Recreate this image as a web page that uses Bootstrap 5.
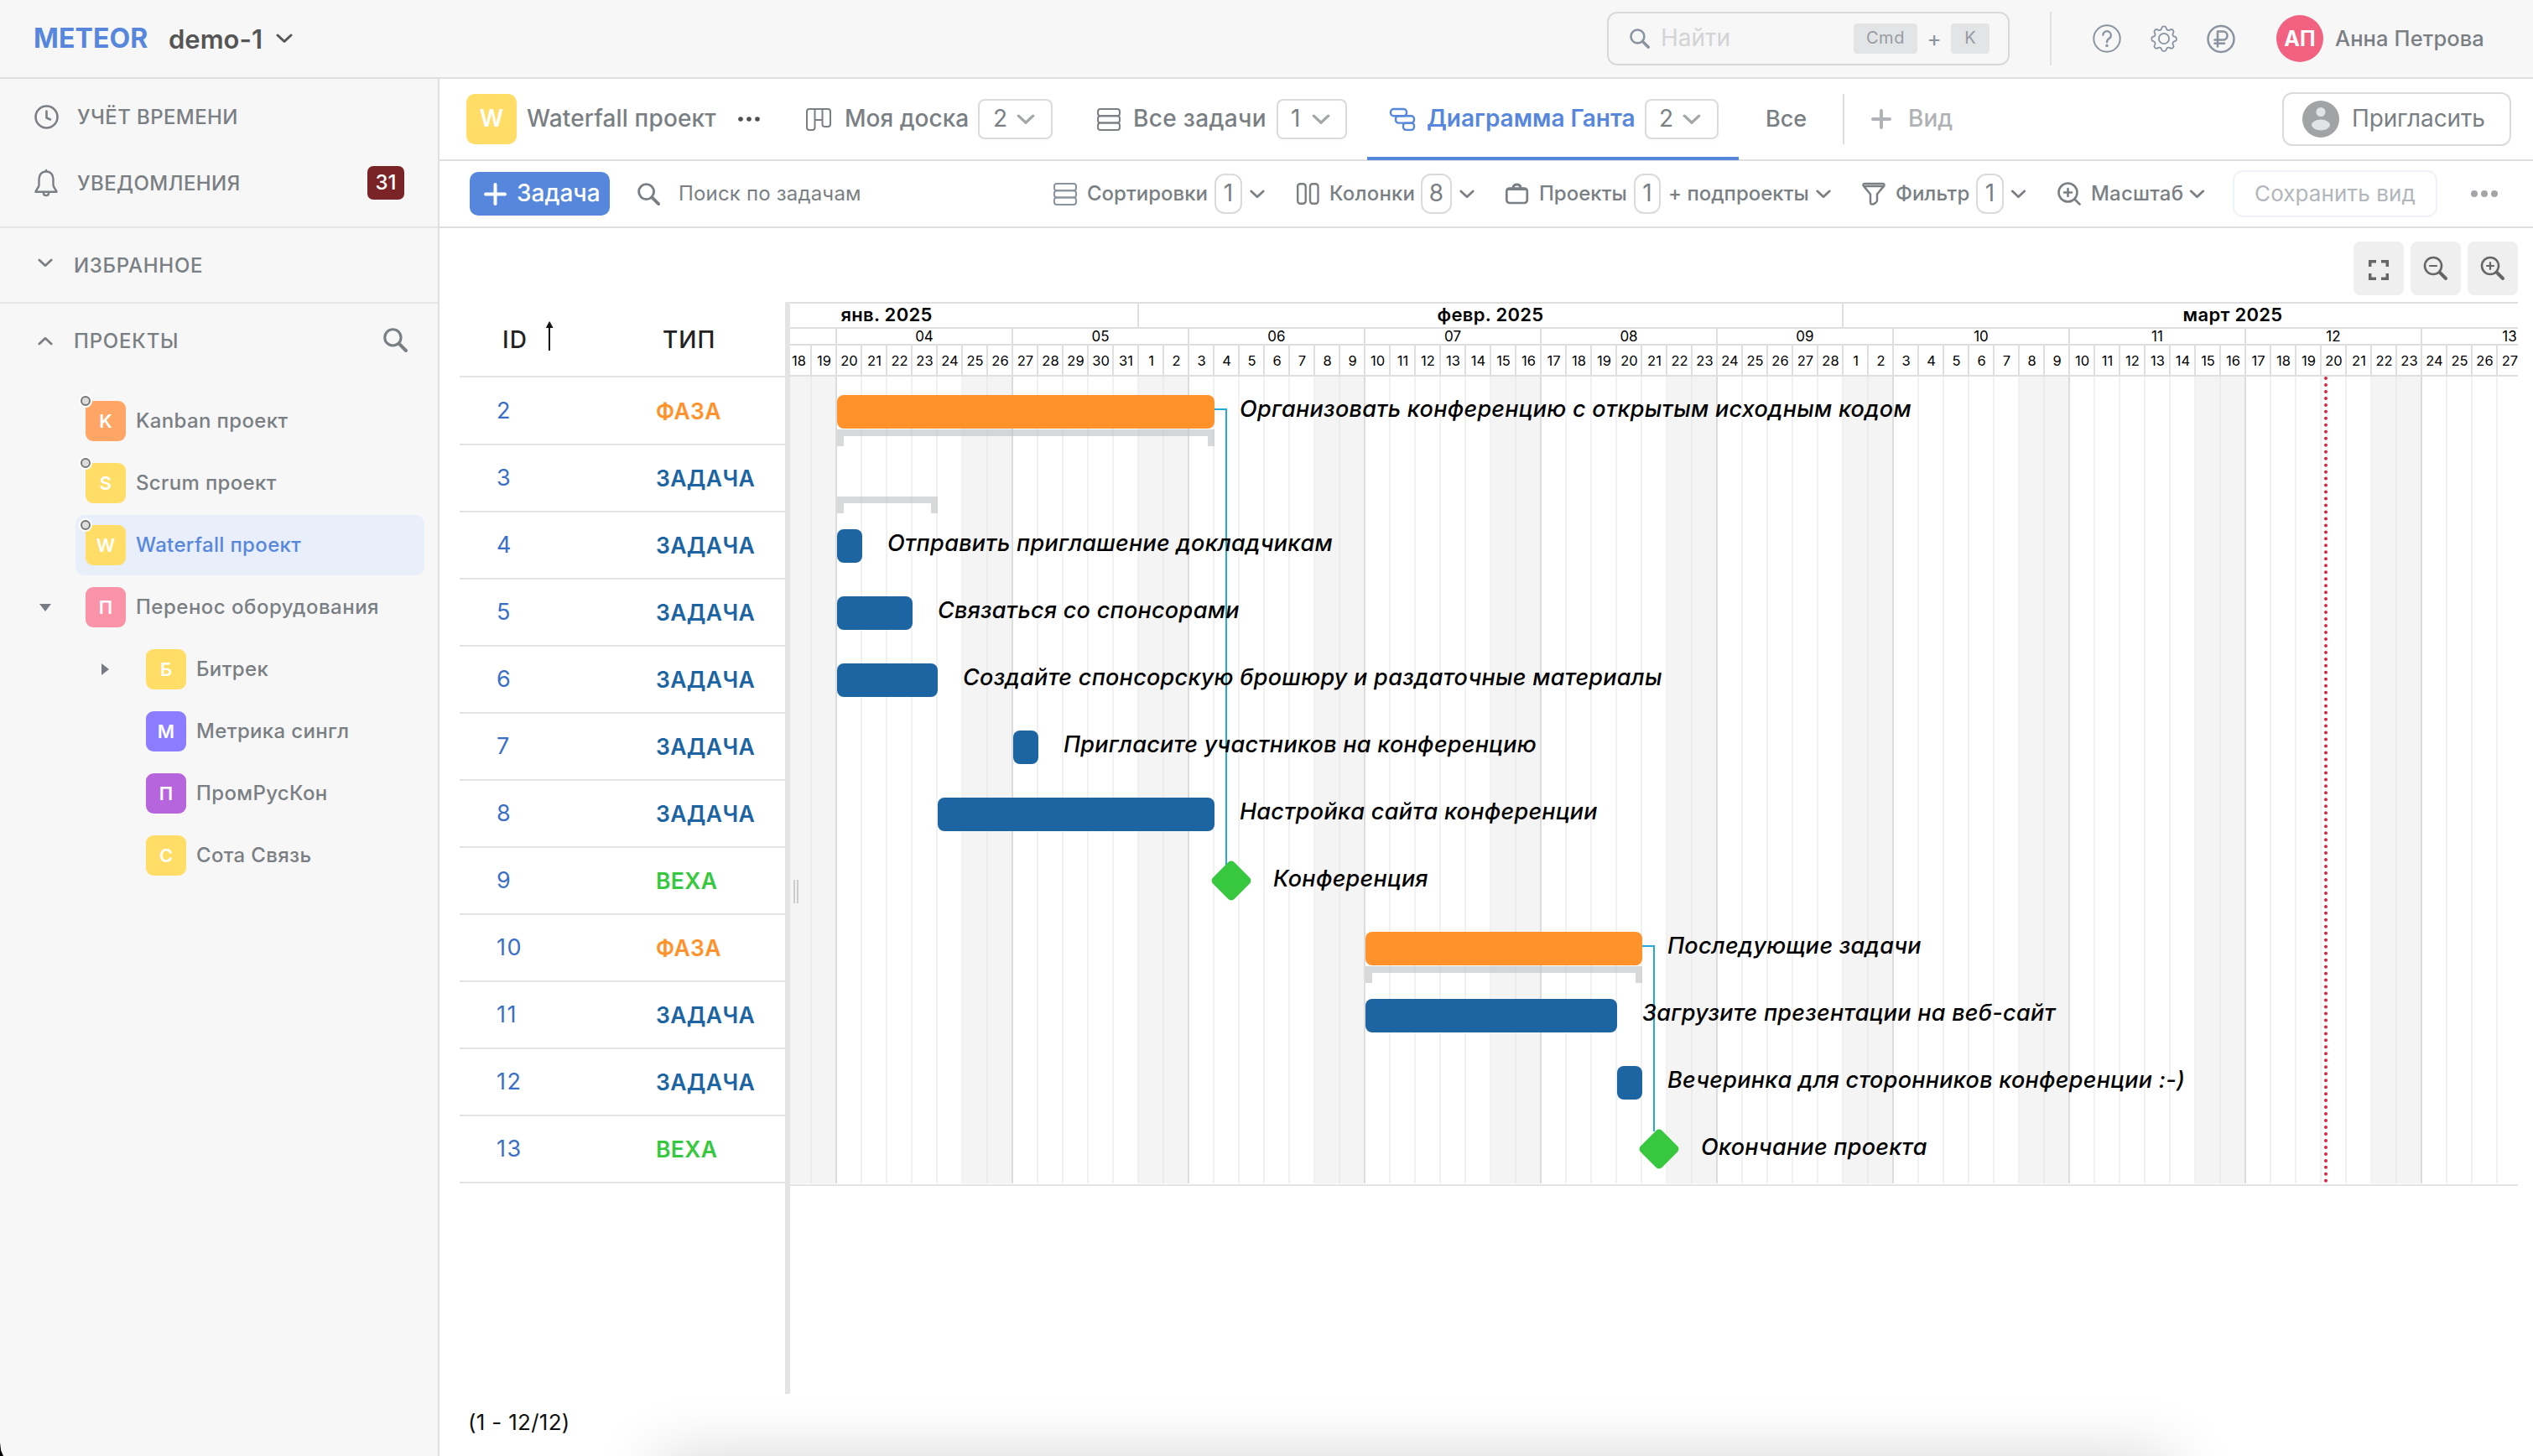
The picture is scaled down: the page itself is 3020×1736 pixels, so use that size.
<!DOCTYPE html>
<html lang="ru">
<head>
<meta charset="utf-8">
<title>METEOR</title>
<link href="https://cdn.jsdelivr.net/npm/bootstrap@5.3.0/dist/css/bootstrap.min.css" rel="stylesheet">
<style>
:root{--line:#dfdfdf;--ink:#7a7f84;--blue:#5787dc}
body{font-family:Inter,"Noto Sans",sans-serif;font-size:24px;line-height:1.21;color:var(--ink);background:#fff;width:3020px;height:1736px;overflow:hidden;position:relative}
svg{display:block;flex:none;fill:none;stroke:currentColor;stroke-width:2;stroke-linecap:round;stroke-linejoin:round;overflow:visible}
.d-flex{white-space:nowrap}
.d-flex>*{flex-shrink:0}
.w5{font-weight:500}.w6{font-weight:600}.w7{font-weight:700}
.topline{height:94px;background:#f7f7f7;border-bottom:2px solid var(--line)}
.brand{font-size:32px;color:var(--blue);letter-spacing:.1px;padding:1px 0 0 40px;width:201px}
.tenant{font-size:31px;color:#555;width:128px;padding-top:1px}
.finder{width:480px;height:64px;border:2px solid #d9d9d9;border-radius:12px;margin-left:1567px;padding-left:25px;color:#8a93a0}
.key{height:36px;background:#e3e4e6;border-radius:4px;font-size:20px;color:#969ba3;padding-bottom:2px}
.vr-line{width:2px;background:#e2e2e2}
.face{width:56px;height:56px;border-radius:50%;background:#f2617f;color:#fff;font-size:25px}
.side{width:524px;height:1642px;background:#f7f7f7;border-right:2px solid var(--line)}
.side-item{height:80px;padding-left:41px;letter-spacing:.4px}
.side-item>span:not(.count31),.side-sec>span{padding-top:1px}
.side-sec{height:90px;border-top:2px solid #e6e6e6;padding-left:45px;letter-spacing:.7px}
.count31{width:44px;height:40px;border-radius:7px;background:#7a2428;color:#fff;letter-spacing:0}
.proj{height:74px;letter-spacing:.35px;position:relative}
.proj.l1{padding-left:102px}
.proj.l2{padding-left:174px}
.proj.active{color:var(--blue)}
.proj.active::before{content:"";position:absolute;left:90px;right:16px;top:1px;height:72px;border-radius:11px;background:#e8eefa}
.proj>*{position:relative}
.tile{width:48px;height:48px;border-radius:9px;color:#fff;font-size:22px;font-weight:600;letter-spacing:0;margin-right:12px}
.tile.big{width:60px;height:60px;border-radius:10px;font-size:28px;margin-right:12px}
.c-y{background:#ffdd66}.c-o{background:#ffa566}.c-p{background:#fa93a8}.c-v{background:#8c7cff}.c-m{background:#b765dd}
.dot{position:absolute;left:-6px;top:-6px;width:12px;height:12px;border-radius:50%;border:2px solid #777;background:#ddd;box-shadow:0 0 0 2px #fff}
.proj .twist{position:absolute;stroke:none;fill:#777c82}
.main-area{width:2496px}
.tabs{height:98px;border-bottom:2px solid var(--line);font-size:28px}
.tab-i{height:96px;position:relative}
.tab-i.on{color:var(--blue)}
.tab-i.on::after{content:"";position:absolute;left:-27px;width:443px;bottom:-1px;height:4px;background:var(--blue)}
.pick{height:48px;border:2px solid #dbdbdb;border-radius:8px;color:#7a7f84;font-weight:400;padding-left:16px;box-shadow:0 3px 3px rgba(0,0,0,.015)}
.invite{width:273px;height:64px;border:2px solid #dbdbdb;border-radius:12px}
.tools{height:80px;border-bottom:2px solid var(--line)}
.addbtn{width:167px;height:52px;border-radius:10px;background:var(--blue);color:#fff;font-size:28px}
.num{height:48px;border:2px solid #dbdbdb;border-radius:12px;font-size:28px}
.save{width:244px;height:56px;border:2px solid #eef3f9;border-radius:12px;color:#b3b6ba;font-size:26px;letter-spacing:.1px}
.zbtn{width:60px;height:64px;border-radius:8px;background:#efefef;color:#666}
.zoombar{height:88px;padding:16px 18px 0 0;gap:8px}
.grid-l{width:388px;margin-left:24px}
.ghead{height:90px;border-bottom:2px solid #e4e4e4;color:#222;font-size:28px;letter-spacing:1px;margin-bottom:1px;padding-top:3px}
.grow{height:80px;border-bottom:2px solid #e4e4e4;font-size:26.5px;padding:1px 0 0 43px}
.grow .gid{width:191px;padding-left:1px;color:#3a6fc8;font-size:27px;letter-spacing:1.5px}
.grow .gty{letter-spacing:.35px;font-weight:600}
.t-ph{color:#ff922b}.t-ta{color:#1d64a3}.t-mi{color:#38c840}
.splitter{width:6px;height:1302px;background:#e4e4e4}
.gantt{width:2060px;height:1054px;position:relative;overflow:hidden;color:#000;border-bottom:2px solid #e4e4e4}
.scale{border-top:2px solid var(--line)}
.sc{border-right:2px solid var(--line)}
.m-row{height:30px;font-size:22px;letter-spacing:.3px}
.m-row .sc{padding-bottom:2px}
.w-row{height:20px;font-size:17px}
.d-row{height:38px;font-size:16.5px}
.w-row .sc{width:210px}.d-row .sc{width:30px;padding-left:1px}
.chart{height:964px;border-top:2px solid var(--line);margin-top:-1px;padding-left:56px;position:relative;
background:
 linear-gradient(90deg,#f1f1f1 0 2px,transparent 2px) 54px 0/30px 100%,
 linear-gradient(90deg,transparent 148px,#f4f4f4 148px 208px,#dcdcdc 208px 210px) 56px 0/210px 100%}
.chart::before{content:"";position:absolute;inset:0;background:linear-gradient(90deg,transparent 178px,#ebebeb 178px 180px,transparent 180px 208px,#dcdcdc 208px 210px) 56px 0/210px 100%}
.lane{height:80px;position:relative}
.bar{height:40px;border-radius:8px;margin-top:21.5px}
.b-ph{background:#ff922b}.b-ta{background:#1d64a3}
.lab{font-style:italic;font-weight:500;font-size:27px;letter-spacing:.27px;padding-left:30px;margin-top:22.5px}
.brk{position:absolute;top:63px;height:20px;border:8px solid rgba(195,196,200,.65);border-bottom:0}
.dia{width:36px;height:36px;border-radius:5px;background:#38c840;transform:rotate(45deg);margin:23px 7px 0}
.lnk{position:absolute;border-top:2px solid #25a9dc;border-right:2px solid #25a9dc}
.now{position:absolute;left:1829px;top:0;bottom:0;border-left:4px dotted #e0213f}
.grip{position:absolute;left:4px;top:689px;width:6px;height:28px;border:solid #ccc;border-width:0 2px;z-index:2}
.pager{color:#111;font-size:26px;letter-spacing:.3px;padding:18px 0 0 34px}
.dock{position:absolute;left:785px;right:430px;top:1742px;height:60px;box-shadow:0 0 80px rgba(0,0,0,.2)}
.corner{position:absolute;left:0;bottom:0;width:4px;height:16px;background:#000;clip-path:polygon(0 0,30% 60%,100% 100%,0 100%)}
</style>
<script src="https://cdn.jsdelivr.net/npm/bootstrap@5.3.0/dist/js/bootstrap.bundle.min.js"></script>
</head>
<body>
<svg width="0" height="0" class="position-absolute">
 <symbol id="chev" viewBox="0 0 20 12"><path d="M2 2l8 7.500 8-7.500" stroke-width="3"/></symbol>
 <symbol id="lens" viewBox="0 0 28 28"><circle cx="11" cy="11" r="9.300" stroke-width="3"/><path d="M18 18l8 8" stroke-width="4"/></symbol>
 <symbol id="stack" viewBox="0 0 28 27"><rect x="1" y="1" width="26" height="8.300" rx="3"/><rect x="1" y="9.300" width="26" height="8.300" rx="3"/><rect x="1" y="17.600" width="26" height="8.300" rx="3"/></symbol>
</svg>

<header class="topline d-flex align-items-center">
 <div class="brand w7">METEOR</div>
 <div class="tenant w6">demo-1</div>
 <svg width="20" height="12" style="color:#555"><use href="#chev"/></svg>
 <div class="finder d-flex align-items-center">
  <svg width="24" height="24"><use href="#lens"/></svg>
  <span style="width:230px;margin-left:13px;font-size:28px;color:#d2d3d5">Найти</span>
  <span class="key d-flex align-items-center justify-content-center" style="width:76px;letter-spacing:.6px">Cmd</span>
  <span class="text-center" style="width:40px;font-size:26px">+</span>
  <span class="key d-flex align-items-center justify-content-center" style="width:46px">K</span>
 </div>
 <div class="vr-line" style="height:64px;margin-left:48px"></div>
 <div class="d-flex align-items-center" style="color:#8a93a0;margin-left:49px;gap:35px">
  <svg width="34" height="34" viewBox="0 0 34 34"><circle cx="17" cy="17" r="15.700"/><path d="M12.300 12.800a4.800 4.800 0 1 1 7.300 4.300c-2 1.200-2.600 2-2.600 4.300" stroke-width="2.300"/><circle cx="17" cy="25.500" r=".8"/></svg>
  <svg width="32" height="32" viewBox="-.4 -.4 16.800 16.800" style="stroke-width:.95"><circle cx="8" cy="8" r="3.200"/><path d="M9.400 1.300c-.4-1.300-2.400-1.300-2.800 0l-.2.600a1.300 1.300 0 0 1-1.800.8l-.6-.3c-1.200-.6-2.500.7-1.900 1.900l.3.600a1.300 1.300 0 0 1-.8 1.800l-.4.100c-1.300.400-1.300 2.400 0 2.800l.4.200a1.300 1.300 0 0 1 .8 1.800l-.3.500c-.6 1.200.7 2.500 1.900 1.900l.6-.3a1.300 1.300 0 0 1 1.800.8l.2.500c.4 1.300 2.400 1.300 2.800 0l.2-.5a1.300 1.300 0 0 1 1.800-.8l.6.3c1.200.6 2.500-.7 1.900-1.900l-.3-.5a1.300 1.300 0 0 1 .8-1.800l.5-.2c1.300-.4 1.300-2.400 0-2.800l-.5-.1a1.300 1.300 0 0 1-.8-1.800l.3-.6c.6-1.200-.7-2.500-1.900-1.900l-.6.3a1.300 1.300 0 0 1-1.800-.8z"/></svg>
  <svg width="34" height="34" viewBox="0 0 34 34"><circle cx="17" cy="17.500" r="15.500" stroke-width="2.500"/><path d="M13 26.500V8.500h6.500a5 5 0 0 1 0 10H9.500M9.500 22.700h11.500" stroke-width="2.600"/></svg>
 </div>
 <div class="face d-flex align-items-center justify-content-center w7" style="margin-left:49px">АП</div>
 <div class="w5" style="margin-left:14px;font-size:25.500px;letter-spacing:.1px">Анна Петрова</div>
</header>

<div class="d-flex">
<aside class="side">
 <div style="padding:5px 0 11px">
  <div class="side-item d-flex align-items-center w5"><svg width="29" height="29" viewBox="0 0 29 29" style="stroke-width:2.600"><circle cx="14.500" cy="14.500" r="13"/><path d="M14.500 7.500v8l4.500 2"/></svg><span style="margin-left:22px">УЧЁТ ВРЕМЕНИ</span></div>
  <div class="side-item d-flex align-items-center w5" style="margin-top:-1px"><svg width="28" height="32" viewBox="0 0 28 32" style="stroke-width:2.400"><path d="M14 2.500c-5.400 0-8.500 4-8.500 9v7c0 3-3 5-4 8.300h25c-1-3.300-4-5.300-4-8.300v-7c0-5-3.100-9-8.500-9zM14 2.300V1M11 28.500a3 2.600 0 0 0 6 0"/></svg><span style="margin-left:23px;width:346px">УВЕДОМЛЕНИЯ</span><span class="count31 d-flex align-items-center justify-content-center">31</span></div>
 </div>
 <div class="side-sec d-flex align-items-center w5" style="margin-top:1px"><svg width="18" height="11" style="margin-top:-5px"><use href="#chev"/></svg><span style="margin-left:25px">ИЗБРАННОЕ</span></div>
 <div class="side-sec d-flex align-items-center w5"><svg width="18" height="11" style="transform:rotate(180deg)"><use href="#chev"/></svg><span style="margin-left:25px;width:369px;letter-spacing:.8px">ПРОЕКТЫ</span><svg width="29" height="29" style="margin-top:-2px"><use href="#lens"/></svg></div>
 <nav class="w5" style="padding-top:15px">
  <div class="proj l1 d-flex align-items-center"><span class="tile c-o d-flex align-items-center justify-content-center">K<i class="dot"></i></span><span>Kanban проект</span></div>
  <div class="proj l1 d-flex align-items-center"><span class="tile c-y d-flex align-items-center justify-content-center">S<i class="dot"></i></span><span>Scrum проект</span></div>
  <div class="proj l1 active d-flex align-items-center"><span class="tile c-y d-flex align-items-center justify-content-center">W<i class="dot"></i></span><span>Waterfall проект</span></div>
  <div class="proj l1 d-flex align-items-center"><svg class="twist" style="left:47px;top:33px" width="14" height="9"><path d="M0 0h14L7 9z"/></svg><span class="tile c-p d-flex align-items-center justify-content-center">П</span><span style="letter-spacing:.5px">Перенос оборудования</span></div>
  <div class="proj l2 d-flex align-items-center"><svg class="twist" style="left:121px;top:30px" width="9" height="14"><path d="M0 0v14l9-7z"/></svg><span class="tile c-y d-flex align-items-center justify-content-center">Б</span><span>Битрек</span></div>
  <div class="proj l2 d-flex align-items-center"><span class="tile c-v d-flex align-items-center justify-content-center">М</span><span>Метрика сингл</span></div>
  <div class="proj l2 d-flex align-items-center"><span class="tile c-m d-flex align-items-center justify-content-center">П</span><span>ПромРусКон</span></div>
  <div class="proj l2 d-flex align-items-center"><span class="tile c-y d-flex align-items-center justify-content-center">С</span><span>Сота Связь</span></div>
 </nav>
</aside>

<main class="main-area">
 <div class="tabs d-flex align-items-center w5">
  <div class="d-flex align-items-center" style="padding-left:32px;width:437px">
   <span class="tile big c-y d-flex align-items-center justify-content-center">W</span><span style="width:252px;letter-spacing:.15px">Waterfall проект</span>
   <svg width="26" height="8" viewBox="0 0 26 8" style="stroke:none;fill:#4d4f52"><circle cx="3" cy="4" r="2.800"/><circle cx="13" cy="4" r="2.800"/><circle cx="23" cy="4" r="2.800"/></svg>
  </div>
  <div class="tab-i d-flex align-items-center" style="width:347px">
   <svg width="30" height="27" viewBox="0 0 30 27"><path d="M10.500 1v22a3 3 0 0 1-3 3H4a3 3 0 0 1-3-3V4a3 3 0 0 1 3-3h22a3 3 0 0 1 3 3v15a3 3 0 0 1-3 3h-3.500a3 3 0 0 1-3-3V1M10.500 14h9"/></svg>
   <span style="margin-left:16px;width:159px">Моя доска</span>
   <span class="pick d-flex align-items-center" style="width:89px">2<svg class="ms-auto" style="color:#a4a7aa;margin-right:19px" width="22" height="13"><use href="#chev"/></svg></span>
  </div>
  <div class="tab-i d-flex align-items-center" style="width:349px">
   <svg width="28" height="27"><use href="#stack"/></svg>
   <span style="margin-left:15px;width:171px;letter-spacing:.35px">Все задачи</span>
   <span class="pick d-flex align-items-center" style="width:84px;padding-left:15px">1<svg class="ms-auto" style="color:#a4a7aa;margin-right:18px" width="22" height="13"><use href="#chev"/></svg></span>
  </div>
  <div class="tab-i on d-flex align-items-center w6" style="width:448px">
   <svg width="30" height="27" viewBox="0 0 30 27" style="stroke-width:2.400"><rect x="1" y="1" width="19" height="8.300" rx="3.500"/><rect x="7" y="9.300" width="22" height="8.300" rx="3.500"/><rect x="16" y="17.600" width="13" height="8.300" rx="3.500"/></svg>
   <span style="margin-left:14px;width:260px">Диаграмма Ганта</span>
   <span class="pick d-flex align-items-center" style="width:88px;padding-left:15px">2<svg class="ms-auto" style="color:#a4a7aa;margin-right:19px" width="22" height="13"><use href="#chev"/></svg></span>
  </div>
  <span style="width:92px;font-size:27px">Все</span>
  <div class="vr-line" style="height:60px;background:#dcdcdc"></div>
  <div class="d-flex align-items-center" style="color:#b0b2b6;width:522px;padding-left:32px"><svg width="24" height="24" viewBox="0 0 24 24" style="stroke-width:4"><path d="M2 12h20M12 2v20"/></svg><span style="margin-left:20px">Вид</span></div>
  <button class="invite btn p-0 d-flex align-items-center bg-white" style="padding-left:22px!important;font-size:28px;color:#7a7f84;line-height:1.210">
   <svg width="44" height="44" viewBox="0 0 44 44" style="stroke:none"><circle cx="22" cy="22" r="22" fill="#a1a3a5"/><circle cx="22" cy="13.500" r="5.500" fill="#e2e3e4"/><ellipse cx="22" cy="29" rx="11" ry="6.500" fill="#e2e3e4"/></svg>
   <span style="margin-left:15px;letter-spacing:-.15px">Пригласить</span></button>
 </div>

 <div class="tools d-flex align-items-center">
  <div class="d-flex align-items-center" style="padding-left:36px;width:732px">
   <button class="addbtn btn p-0 d-flex align-items-center w5" style="padding-left:16px!important;line-height:1.210"><svg width="27" height="27" viewBox="0 0 27 27" style="stroke-width:4"><path d="M2 13.500h23M13.500 2v23"/></svg><span style="margin-left:12px">Задача</span></button>
   <svg style="margin-left:33px" width="27" height="27"><use href="#lens"/></svg>
   <span style="margin-left:22px;letter-spacing:.18px">Поиск по задачам</span>
  </div>
  <div class="d-flex align-items-center w5" style="width:290px"><svg width="28" height="27" style="color:#8a93a0"><use href="#stack"/></svg><span style="margin-left:12px;width:152px">Сортировки</span><span class="num fw-normal d-flex align-items-center justify-content-center" style="width:33px">1</span><svg style="margin-left:9px" width="18" height="11"><use href="#chev"/></svg></div>
  <div class="d-flex align-items-center w5" style="width:249px"><svg width="27" height="26" viewBox="0 0 27 26" style="stroke-width:2.400"><rect x="1.200" y="1.200" width="9.500" height="23.600" rx="3"/><rect x="16" y="1.200" width="9.500" height="23.600" rx="3"/></svg><span style="margin-left:12px;width:109px;letter-spacing:.2px">Колонки</span><span class="num fw-normal d-flex align-items-center justify-content-center" style="width:37px">8</span><svg style="margin-left:9px" width="18" height="11"><use href="#chev"/></svg></div>
  <div class="d-flex align-items-center w5" style="width:425px"><svg width="27" height="26" viewBox="0 0 27 26"><rect x="1.300" y="6.500" width="24.500" height="17.500" rx="3.500" stroke-width="2.700"/><path d="M2.500 7.500h22M9 6c0-5.500 9-5.500 9 0" stroke-width="3"/></svg><span style="margin-left:13px;width:113px">Проекты</span><span class="num fw-normal d-flex align-items-center justify-content-center" style="width:32px">1</span><span style="margin-left:9px;width:175px">+ подпроекты</span><svg width="20" height="11"><use href="#chev"/></svg></div>
  <div class="d-flex align-items-center w5" style="width:233px"><svg width="28" height="28" viewBox="0 0 28 28" style="stroke-width:2.500"><path d="M3 2h22c1.500 0 2 1.500 1.200 2.600L18 14.500V22c0 2-4 5-6.500 4.500-1-.2-1.500-.8-1.500-2V14.500L1.800 4.600C1 3.500 1.500 2 3 2zM4 5h20"/></svg><span style="margin-left:12px;width:96px">Фильтр</span><span class="num fw-normal d-flex align-items-center justify-content-center" style="width:33px">1</span><svg style="margin-left:8px" width="19" height="11"><use href="#chev"/></svg></div>
  <div class="d-flex align-items-center w5" style="width:209px"><svg width="28" height="28" viewBox="0 0 28 28" style="stroke-width:2.600"><circle cx="12.500" cy="12.500" r="11"/><path d="M8 12.500h9M12.500 8v9M20.500 20.500l6 6"/></svg><span style="margin-left:12px;width:117px;letter-spacing:.2px">Масштаб</span><svg width="19" height="11"><use href="#chev"/></svg></div>
  <div class="save d-flex align-items-center justify-content-center">Сохранить вид</div>
  <svg style="margin-left:40px;stroke:none;fill:#a3a5a8" width="32" height="8" viewBox="0 0 32 8"><circle cx="4" cy="4" r="4"/><circle cx="16" cy="4" r="4"/><circle cx="28" cy="4" r="4"/></svg>
 </div>

 <div class="zoombar d-flex justify-content-end">
  <div class="zbtn d-flex align-items-center justify-content-center"><svg width="24" height="24" viewBox="0 0 24 24" style="stroke-width:3.500;stroke-linecap:butt;stroke-linejoin:miter;margin-top:3px"><path d="M1.700 8V1.700H9M15 1.700h7.300V8M22.300 16v6.300H15M9 22.300H1.700V16"/></svg></div>
  <div class="zbtn d-flex align-items-center justify-content-center"><svg width="28" height="28" viewBox="0 0 28 28"><circle cx="11" cy="11" r="10" stroke-width="2.600"/><path d="M7 11h8" stroke-width="2.200"/><path d="M19 19l7 7" stroke-width="4"/></svg></div>
  <div class="zbtn d-flex align-items-center justify-content-center"><svg width="28" height="28" viewBox="0 0 28 28"><circle cx="11" cy="11" r="10" stroke-width="2.600"/><path d="M7 11h8M11 7v8" stroke-width="2.200"/><path d="M19 19l7 7" stroke-width="4"/></svg></div>
 </div>

 <div class="d-flex align-items-start position-relative">
  <div class="grid-l">
   <div class="ghead d-flex align-items-center w5"><span style="padding-left:51px;width:102px">ID</span><svg width="10" height="36" viewBox="0 0 10 36" style="color:#111;margin-top:-9px"><path d="M5 6v29" stroke-linecap="butt"/><path d="M5 1L1.500 7.500h7z" fill="#111" stroke-width="1"/></svg><span style="margin-left:130px">ТИП</span></div>
   <div id="rows"></div>
  </div>
  <div class="splitter"></div>
  <div class="gantt">
   <i class="grip"></i>
   <div class="scale m-row d-flex w6 lh-1">
    <div class="sc d-flex align-items-center justify-content-center" style="width:416px;padding-right:184px">янв. 2025</div>
    <div class="sc d-flex align-items-center justify-content-center" style="width:840px">февр. 2025</div>
    <div class="sc d-flex align-items-center justify-content-center" style="width:930px">март 2025</div>
   </div>
   <div class="scale w-row d-flex lh-1" id="weeks"><div class="sc" style="width:56px"></div></div>
   <div class="scale d-row d-flex lh-1" id="days" style="margin-left:-4px"></div>
   <div class="chart" id="chart"><i class="now"></i></div>
  </div>
 </div>
 <div class="pager">(1 - 12/12)</div>
</main>
</div>
<div class="dock"></div>
<i class="corner"></i>

<script>
const names={ph:'ФАЗА',ta:'ЗАДАЧА',mi:'ВЕХА'};
// id, type, start day, length in days, label; day 0 is 20 January
const tasks=[
 [2,'ph',0,15,'Организовать конференцию с открытым исходным кодом'],
 [3,'ta',0,4,''],
 [4,'ta',0,1,'Отправить приглашение докладчикам'],
 [5,'ta',0,3,'Связаться со спонсорами'],
 [6,'ta',0,4,'Создайте спонсорскую брошюру и раздаточные материалы'],
 [7,'ta',7,1,'Пригласите участников на конференцию'],
 [8,'ta',4,11,'Настройка сайта конференции'],
 [9,'mi',15,0,'Конференция'],
 [10,'ph',21,11,'Последующие задачи'],
 [11,'ta',21,10,'Загрузите презентации на веб-сайт'],
 [12,'ta',31,1,'Вечеринка для сторонников конференции :-)'],
 [13,'mi',32,0,'Окончание проекта']];
const D=30;let rows='',lanes='';
for(const [id,t,s,n,l] of tasks){
 rows+=`<div class="grow d-flex align-items-center w5"><span class="gid fw-normal">${id}</span><span class="gty t-${t}">${names[t]}</span></div>`;
 const x=s*D,w=n*D;
 let h='';
 if(t==='mi') h=`<div class="dia" style="margin-left:${x+2}px"></div><div class="lab" style="padding-left:25px">${l}</div>`;
 else if(l) h=`<div class="bar b-${t}" style="margin-left:${x}px;width:${w}px"></div><div class="lab">${l}</div>`;
 if(t==='ph'||!l) h+=`<i class="brk" style="left:${x}px;width:${w}px"></i>`;
 if(t==='ph') h+=`<i class="lnk" style="left:${x+w}px;top:38px;width:15px;height:${id===2?545:222}px"></i>`;
 lanes+=`<div class="lane d-flex align-items-start">${h}</div>`;
}
document.getElementById('rows').innerHTML=rows;
document.getElementById('chart').insertAdjacentHTML('beforeend',lanes);
let d='',w='';
for(let i=0;i<69;i++){const day=new Date(2025,0,18+i).getDate();d+=`<div class="sc d-flex align-items-center justify-content-center">${day}</div>`}
for(let i=4;i<14;i++)w+=`<div class="sc d-flex align-items-center justify-content-center">${String(i).padStart(2,'0')}</div>`;
document.getElementById('days').innerHTML=d;
document.getElementById('weeks').insertAdjacentHTML('beforeend',w);
</script>
</body>
</html>
